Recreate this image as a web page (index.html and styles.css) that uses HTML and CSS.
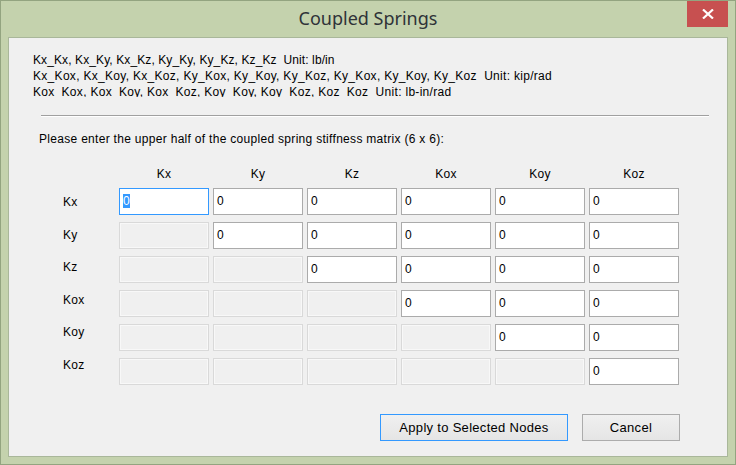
FILE: index.html
```html
<!DOCTYPE html>
<html lang="en">
<head>
    <meta charset="UTF-8">
    <meta name="viewport" content="width=device-width, initial-scale=1.0">
    <title>Coupled Springs</title>
    <link rel="stylesheet" href="styles.css">
</head>
<body>
    <div class="window">
        <div class="titlebar">
            <span class="title">Coupled Springs</span>
            <button class="close-button" title="Close">
                <svg width="12" height="10" viewBox="0 0 12 10"><path d="M1 0.5 L11 9.5 M11 0.5 L1 9.5" stroke="#fff" stroke-width="2.2" fill="none"/></svg>
            </button>
        </div>
        <div class="client">
            <div class="units">
                <div class="units-linear">Kx_Kx, Kx_Ky, Kx_Kz, Ky_Ky, Ky_Kz, Kz_Kz&nbsp; Unit: lb/in</div>
                <div>Kx_Kox, Kx_Koy, Kx_Koz, Ky_Kox, Ky_Koy, Ky_Koz, Ky_Kox, Ky_Koy, Ky_Koz&nbsp; Unit: kip/rad</div>
                <div>Kox_Kox, Kox_Koy, Kox_Koz, Koy_Koy, Koy_Koz, Koz_Koz&nbsp; Unit: lb-in/rad</div>
            </div>
            <div class="separator"></div>
            <p class="prompt">Please enter the upper half of the coupled spring stiffness matrix (6 x 6):</p>
            <div class="matrix">
                <div class="row-labels">
                    <span>Kx</span>
                    <span>Ky</span>
                    <span>Kz</span>
                    <span>Kox</span>
                    <span>Koy</span>
                    <span>Koz</span>
                </div>
                <div class="cells">
                    <div class="col-heads">
                        <span>Kx</span><span>Ky</span><span>Kz</span><span>Kox</span><span>Koy</span><span>Koz</span>
                    </div>
                    <div class="grid">
                        <div class="box focus"><span class="selected">0</span></div>
                        <div class="box">0</div><div class="box">0</div><div class="box">0</div><div class="box">0</div><div class="box">0</div>

                        <div class="box disabled"></div>
                        <div class="box">0</div><div class="box">0</div><div class="box">0</div><div class="box">0</div><div class="box">0</div>

                        <div class="box disabled"></div><div class="box disabled"></div>
                        <div class="box">0</div><div class="box">0</div><div class="box">0</div><div class="box">0</div>

                        <div class="box disabled"></div><div class="box disabled"></div><div class="box disabled"></div>
                        <div class="box">0</div><div class="box">0</div><div class="box">0</div>

                        <div class="box disabled"></div><div class="box disabled"></div><div class="box disabled"></div><div class="box disabled"></div>
                        <div class="box">0</div><div class="box">0</div>

                        <div class="box disabled"></div><div class="box disabled"></div><div class="box disabled"></div><div class="box disabled"></div><div class="box disabled"></div>
                        <div class="box">0</div>
                    </div>
                </div>
            </div>
            <div class="actions">
                <button class="button default">Apply to Selected Nodes</button>
                <button class="button cancel">Cancel</button>
            </div>
        </div>
    </div>
</body>
</html>
```

FILE: styles.css
```css
body {
    margin: 0;
    font-family: "Liberation Sans", Arial, sans-serif;
    font-size: 12px;
    letter-spacing: 0.3px;
    color: #000;
}
.window {
    position: relative;
    width: 736px;
    height: 465px;
    box-sizing: border-box;
    background-color: #c4d2ad;
    border: 1px solid #93a480;
    display: flex;
    flex-direction: column;
}
.titlebar {
    height: 36px;
    display: flex;
    align-items: center;
    justify-content: center;
}
.title {
    font-family: "Noto Sans", "Open Sans", sans-serif;
    font-size: 18px;
    letter-spacing: 0;
    color: #2f3338;
    margin-top: -2px;
}
.close-button {
    position: absolute;
    top: 0;
    right: 7px;
    width: 41px;
    height: 26px;
    border: none;
    padding: 0;
    background-color: #c75050;
    display: flex;
    align-items: center;
    justify-content: center;
}
.client {
    flex: 1;
    margin: 0 7px 7px 7px;
    background-color: #f0f0f0;
    border: 1px solid #a9b79a;
}
.units {
    margin: 14px 0 0 24px;
    height: 45px;
    overflow: hidden;
    line-height: 16px;
    white-space: nowrap;
}
.units-linear {
    letter-spacing: 0.1px;
}
.separator {
    margin: 18px 18px 0 32px;
    border-top: 1px solid #a0a0a0;
    border-bottom: 1px solid #fff;
}
.prompt {
    margin: 14px 0 0 30px;
    line-height: 16px;
}
.matrix {
    display: flex;
    margin-top: 19px;
}
.row-labels {
    width: 56px;
    margin-left: 54px;
    padding-top: 30px;
    display: flex;
    flex-direction: column;
    gap: 19.5px;
}
.row-labels span {
    line-height: 13px;
}
.col-heads, .grid {
    display: grid;
    grid-template-columns: repeat(6, 90px);
    column-gap: 4px;
}
.col-heads span {
    text-align: center;
    line-height: 16px;
}
.grid {
    margin-top: 6px;
    grid-auto-rows: 27px;
    row-gap: 7px;
}
.box {
    box-sizing: border-box;
    background-color: #fff;
    border: 1px solid #ababab;
    padding: 6px 0 0 3px;
    line-height: 13px;
}
.box.focus {
    border-color: #3399ff;
}
.box .selected {
    background-color: #3399ff;
    color: #fff;
}
.box.disabled {
    background-color: #f0f0f0;
    border-color: #d9d9d9;
    box-shadow: inset 0 0 0 1px #f8f8f8;
}
.actions {
    display: flex;
    justify-content: flex-end;
    gap: 14px;
    margin: 29px 47px 0 0;
}
.button {
    height: 27px;
    font-family: "Liberation Sans", Arial, sans-serif;
    font-size: 13px;
    letter-spacing: 0.3px;
    color: #000;
    background: linear-gradient(#f0f0f0, #e5e5e5);
    border: 1px solid #acacac;
    padding: 0;
}
.button.default {
    width: 188px;
    border-color: #3399ff;
}
.button.cancel {
    width: 98px;
}
```
